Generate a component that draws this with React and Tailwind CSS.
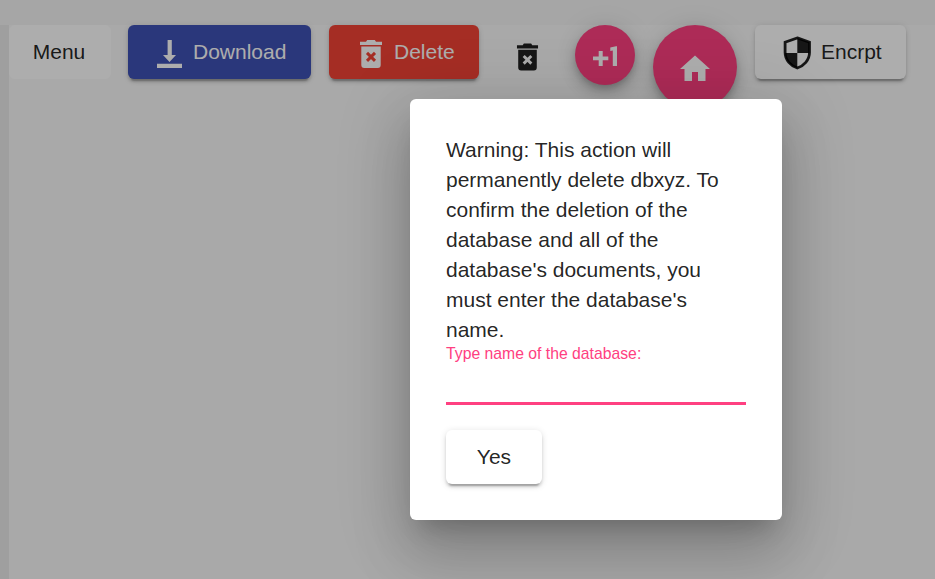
const raised =
  "shadow-[0_4.5px_1.5px_-3px_rgba(0,0,0,0.2),0_3px_3px_rgba(0,0,0,0.14),0_1.5px_7.5px_rgba(0,0,0,0.12)]";
const floating =
  "shadow-[0_4.5px_7.5px_-1.5px_rgba(0,0,0,0.2),0_9px_15px_rgba(0,0,0,0.14),0_1.5px_27px_rgba(0,0,0,0.12)]";

function DownloadIcon() {
  return (
    <svg className="h-9 w-9 shrink-0" viewBox="0 0 36 36" fill="currentColor">
      <path d="M15.6 6h4.2v15H24l-6.500 7L11 21h4.600zM5 29.700h25V34H5z" />
    </svg>
  );
}

function BinIcon({ cross, className }) {
  return (
    <svg className={className} viewBox="0 0 24 30" fill="currentColor">
      <path d="M1 2.700h6L8.200 1h7.600L17 2.700h6V6H1zM2.300 7.400h19.400V26a3 3 0 0 1-3 3H5.300a3 3 0 0 1-3-3z" />
      <path d="M8 13.900l8 8M16 13.900l-8 8" stroke={cross} strokeWidth="3" />
    </svg>
  );
}

function ShieldIcon() {
  return (
    <svg className="h-9 w-9 shrink-0" viewBox="0 0 36 36">
      <g transform="translate(0.300 0.500)">
        <path
          d="M18 3.400 30.200 7.700V18c0 7.600-5.800 13.400-12.200 15.500C11.600 31.400 5.800 25.600 5.800 18V7.700z"
          fill="none"
          stroke="currentColor"
          strokeWidth="2.800"
        />
        <path d="M18 3.400 30.200 7.700V18.500H18zM5.800 18.500H18v15C11.600 31.400 5.800 26 5.800 18.500z" fill="currentColor" />
      </g>
    </svg>
  );
}

export default function App() {
  return (
    <div className="relative h-[579px] w-[935px] overflow-hidden bg-[#f5f5f5] pt-[25px] font-['Liberation_Sans',Arial,sans-serif] text-[21px] text-black/87">
      <div className="flex h-[554px] border-l-[9px] border-[#ebebeb] bg-[#fafafa]">
        <div className="flex w-full items-start">
          <button className="h-[54px] w-[102px] rounded-md bg-white pr-0.5">Menu</button>
          <button className={`ml-[17px] flex h-[54px] w-[183px] items-center rounded-md bg-[#3f51b5] pl-6 text-white ${raised}`}>
            <DownloadIcon />
            <span className="ml-[5px]">Download</span>
          </button>
          <button className={`ml-[18px] flex h-[54px] w-[150px] items-center rounded-md bg-[#f44336] pl-[30px] text-white ${raised}`}>
            <BinIcon cross="#f44336" className="mt-1 h-[30px] w-6 shrink-0" />
            <span className="ml-[11px]">Delete</span>
          </button>
          <button className="ml-[18px] flex h-[60px] w-[60px] justify-center pt-[17px]">
            <BinIcon cross="#fafafa" className="ml-px h-[30px] w-[23px]" />
          </button>
          <button className={`ml-[18px] flex h-[60px] w-[60px] items-center justify-center rounded-full bg-[#ff4081] text-white ${floating}`}>
            <svg className="mt-0.5 h-9 w-9" viewBox="0 0 36 36" fill="currentColor">
              <path d="M11.700 13H15.700V18.500H21.300V22.300H15.700V28H11.700V22.300H6V18.500H11.700zM23.300 9.500 29 8.200H30V28H25.800V12.400L23.300 12.900z" />
            </svg>
          </button>
          <button className={`ml-[18px] flex h-[84px] w-[84px] items-center justify-center rounded-full bg-[#ff4081] text-white ${floating}`}>
            <svg className="mt-[3px] h-9 w-9" viewBox="0 0 24 24" fill="currentColor">
              <path d="M10 20v-6h4v6h5v-8h3L12 3 2 12h3v8z" />
            </svg>
          </button>
          <button className={`ml-[18px] flex h-[54px] w-[151px] items-center rounded-md bg-white pl-6 ${raised}`}>
            <ShieldIcon />
            <span className="ml-1.5">Encrpt</span>
          </button>
        </div>
      </div>

      <div className="absolute inset-0 bg-black/32">
        <section className="ml-[410px] mt-[99px] h-[421px] w-[372px] rounded-md bg-white p-9 shadow-[0_16.5px_22.5px_-10.5px_rgba(0,0,0,0.2),0_36px_57px_4.5px_rgba(0,0,0,0.14),0_13.5px_69px_12px_rgba(0,0,0,0.12)]">
          <p className="leading-[30px]">
            Warning: This action will permanently delete dbxyz. To confirm the deletion of the database and all of the
            database's documents, you must enter the database's name.
          </p>
          <label className="block h-[60px] border-b-3 border-[#ff4081] text-[#ff4081]">
            <span className="block origin-top-left scale-75 whitespace-nowrap leading-[22px] [transform:perspective(100px)]">
              Type name of the database:
            </span>
          </label>
          <button className={`mt-[25px] h-[54px] w-24 rounded-md bg-white ${raised}`}>Yes</button>
        </section>
      </div>
    </div>
  );
}
